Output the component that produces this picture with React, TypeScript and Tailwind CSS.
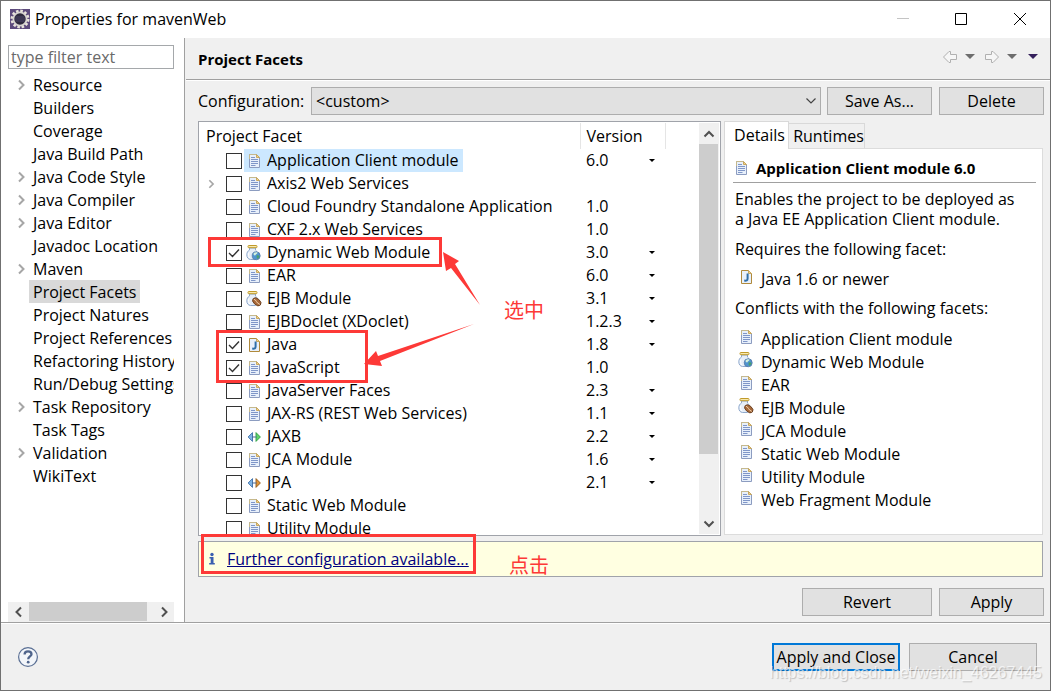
import React from "react";

type IconKind = "doc" | "jarWeb" | "jarBean" | "java" | "jaxb" | "jpa";

interface TreeEntry {
  label: string;
  children?: boolean;
  selected?: boolean;
}

interface Facet {
  name: string;
  icon: IconKind;
  version?: string;
  menu?: boolean;
  checked?: boolean;
  expandable?: boolean;
  selected?: boolean;
}

const tree: TreeEntry[] = [
  { label: "Resource", children: true },
  { label: "Builders" },
  { label: "Coverage" },
  { label: "Java Build Path" },
  { label: "Java Code Style", children: true },
  { label: "Java Compiler", children: true },
  { label: "Java Editor", children: true },
  { label: "Javadoc Location" },
  { label: "Maven", children: true },
  { label: "Project Facets", selected: true },
  { label: "Project Natures" },
  { label: "Project References" },
  { label: "Refactoring History" },
  { label: "Run/Debug Settings" },
  { label: "Task Repository", children: true },
  { label: "Task Tags" },
  { label: "Validation", children: true },
  { label: "WikiText" },
];

const facets: Facet[] = [
  { name: "Application Client module", icon: "doc", version: "6.0", menu: true, selected: true },
  { name: "Axis2 Web Services", icon: "doc", expandable: true },
  { name: "Cloud Foundry Standalone Application", icon: "doc", version: "1.0" },
  { name: "CXF 2.x Web Services", icon: "doc", version: "1.0" },
  { name: "Dynamic Web Module", icon: "jarWeb", version: "3.0", menu: true, checked: true },
  { name: "EAR", icon: "doc", version: "6.0", menu: true },
  { name: "EJB Module", icon: "jarBean", version: "3.1", menu: true },
  { name: "EJBDoclet (XDoclet)", icon: "doc", version: "1.2.3", menu: true },
  { name: "Java", icon: "java", version: "1.8", menu: true, checked: true },
  { name: "JavaScript", icon: "doc", version: "1.0", checked: true },
  { name: "JavaServer Faces", icon: "doc", version: "2.3", menu: true },
  { name: "JAX-RS (REST Web Services)", icon: "doc", version: "1.1", menu: true },
  { name: "JAXB", icon: "jaxb", version: "2.2", menu: true },
  { name: "JCA Module", icon: "doc", version: "1.6", menu: true },
  { name: "JPA", icon: "jpa", version: "2.1", menu: true },
  { name: "Static Web Module", icon: "doc" },
  { name: "Utility Module", icon: "doc" },
];

const conflicts: { name: string; icon: IconKind }[] = [
  { name: "Application Client module", icon: "doc" },
  { name: "Dynamic Web Module", icon: "jarWeb" },
  { name: "EAR", icon: "doc" },
  { name: "EJB Module", icon: "jarBean" },
  { name: "JCA Module", icon: "doc" },
  { name: "Static Web Module", icon: "doc" },
  { name: "Utility Module", icon: "doc" },
  { name: "Web Fragment Module", icon: "doc" },
];

function Page({ stroke }: { stroke: string }) {
  return (
    <>
      <path d="M3.5 1.5H10.5L13.5 4.5V14.5H3.5Z" fill="#e8f0fb" stroke={stroke} />
      <path d="M10.5 1.5V4.5H13.5Z" fill="#f0d48c" stroke="#c9a860" />
    </>
  );
}

function Jar() {
  return (
    <>
      <path d="M3.5 3V5C1.8 6 0.8 7.5 0.8 9.8C0.8 12.5 2.2 14.3 4.5 14.5H9C11 14 11.5 12 11.5 9.5C11.5 7.5 10.8 6 9.5 5V3Z" fill="#e6eef8" stroke="#8fa9cc" />
      <path d="M3 7.5C2.2 9.5 2.5 11.5 3.8 13" fill="none" stroke="#ffffff" />
      <rect x="2" y="0.5" width="9" height="2.2" rx="0.8" fill="#f8e9ae" stroke="#c09a2a" />
    </>
  );
}

function FacetIcon({ kind }: { kind: IconKind }) {
  return (
    <svg viewBox="0 0 16 16" className="size-4 shrink-0" aria-hidden="true">
      {kind === "doc" && (
        <>
          <Page stroke="#8c9cc0" />
          <path d="M3.5 6V1.5H10" fill="none" stroke="#c6b98c" />
          <path d="M5 4.5H9M5 6.5H12M5 8.5H12M5 10.5H12M5 12.5H9.5" stroke="#7f96c8" />
        </>
      )}
      {kind === "java" && (
        <>
          <Page stroke="#b08a3c" />
          <path d="M9.6 4.5V9.6C9.6 11.4 8.6 12 6.2 11.6" fill="none" stroke="#2f6ea8" strokeWidth="2" />
        </>
      )}
      {kind === "jarWeb" && (
        <>
          <Jar />
          <circle cx="10.2" cy="10.8" r="4" fill="#4f93cf" stroke="#5678a4" strokeWidth="0.8" />
          <path d="M7.6 8.6C8.6 7.2 10.6 7 11.6 7.6C11.4 9.2 9.6 9.2 9.2 10.6C8.2 10.4 7.4 9.8 7.6 8.6Z" fill="#d4f0dc" />
          <path d="M10.6 10.6C12 10 13.2 10.6 13.4 11.4C12.8 13 11.6 13.8 10.8 13.6Z" fill="#49a06c" />
        </>
      )}
      {kind === "jarBean" && (
        <>
          <Jar />
          <ellipse cx="10.8" cy="10.8" rx="4.8" ry="3.1" transform="rotate(42 10.8 10.8)" fill="#a8693a" stroke="#5f3517" strokeWidth="0.8" />
          <path d="M7.8 8.2C10.4 8.6 10.4 12.4 13.8 13.4" fill="none" stroke="#f0d2ae" />
        </>
      )}
      {(kind === "jaxb" || kind === "jpa") && (
        <>
          <path d="M6.5 3.6V12.4L2.1 8Z" fill="#7fb4e4" stroke="#3b6ea8" strokeWidth="0.9" />
          <path
            d="M10 3.6V12.4L14.4 8Z"
            fill={kind === "jaxb" ? "#5fd46a" : "#e0953a"}
            stroke={kind === "jaxb" ? "#2f9c45" : "#8f5a1c"}
            strokeWidth="0.9"
          />
          <path d="M6 8H10.5" stroke="#4a6a94" />
        </>
      )}
    </svg>
  );
}

function Chevron({ d, className, width = 2 }: { d: string; className: string; width?: number }) {
  return (
    <svg viewBox="0 0 12 12" className={className} fill="none" stroke="currentColor" strokeWidth={width} aria-hidden="true">
      <path d={d} />
    </svg>
  );
}

const RIGHT = "M4 1.5L8.5 6L4 10.5";
const LEFT = "M8 1.5L3.5 6L8 10.5";
const UP = "M1.5 8.5L6 4L10.5 8.5";
const DOWN = "M1.5 3.5L6 8L10.5 3.5";

function GearLogo() {
  return (
    <svg viewBox="0 0 20 20" className="size-5" aria-hidden="true">
      <rect width="20" height="20" fill="#5d4a7c" />
      <circle cx="10" cy="10" r="8" fill="none" stroke="#e9e4dc" strokeWidth="3" strokeDasharray="2.5 1.69" />
      <circle cx="10" cy="10" r="6.6" fill="#2f2a3e" stroke="#d8d4d0" strokeWidth="1.8" />
      <path d="M5.5 8H14.5M5 10H15M5.5 12H14.5" stroke="#4c4468" />
    </svg>
  );
}

function NavArrow({ flip }: { flip?: boolean }) {
  return (
    <svg viewBox="0 0 16 14" className="h-[14px] w-4" fill="#f6f6f6" stroke="#b0b0b0" aria-hidden="true">
      <path
        d={
          flip
            ? "M1.5 4.5H7.5V1.5H9L14.5 7L9 12.5H7.5V9.5H1.5Z"
            : "M14.5 4.5H8.5V1.5H7L1.5 7L7 12.5H8.5V9.5H14.5Z"
        }
        strokeLinejoin="round"
      />
    </svg>
  );
}

function Caret({ className }: { className: string }) {
  return (
    <svg viewBox="0 0 10 5" className={className} fill="currentColor" aria-hidden="true">
      <path d="M0 0H10L5 5Z" />
    </svg>
  );
}

function PushButton({ children, className }: { children: React.ReactNode; className: string }) {
  return (
    <button type="button" className={`h-7 border border-[#adadad] bg-[#e1e1e1] text-center ${className}`}>
      {children}
    </button>
  );
}

function TitleBar() {
  return (
    <header className="flex h-[37px] shrink-0 items-center bg-white pb-px pl-[9px]">
      <GearLogo />
      <h1 className="ml-[5px] grow">Properties for mavenWeb</h1>
      <button type="button" aria-label="Minimize" className="flex w-[58px] justify-center text-[#c4c4c4]">
        <svg viewBox="0 0 12 12" className="size-3" stroke="currentColor"><path d="M0 5.5H12" /></svg>
      </button>
      <button type="button" aria-label="Maximize" className="flex w-[58px] justify-center">
        <svg viewBox="0 0 12 12" className="size-3" fill="none" stroke="currentColor"><path d="M0.5 0.5H11.5V11.5H0.5Z" /></svg>
      </button>
      <button type="button" aria-label="Close" className="flex w-[60px] justify-center">
        <svg viewBox="0 0 12 12" className="size-3" stroke="currentColor"><path d="M0 0L12 12M12 0L0 12" /></svg>
      </button>
    </header>
  );
}

function Sidebar() {
  return (
    <nav className="flex w-[184px] shrink-0 flex-col border-r border-[#a0a0a0] bg-white pt-[7px] pr-[10px] pl-[7px]">
      <input
        type="text"
        aria-label="Filter"
        placeholder="type filter text"
        className="h-6 w-full shrink-0 border border-[#a5a8ab] bg-white px-[2px] outline-none placeholder:text-[#6a6a6a]"
      />
      <ul className="mt-1 min-h-0 grow overflow-hidden">
        {tree.map((entry) => (
          <li key={entry.label} className="flex h-[23px] items-center">
            <span className="flex w-[21px] shrink-0 justify-center pl-[5px] text-[#a6a6a6]">
              {entry.children && <Chevron d={RIGHT} className="size-3" />}
            </span>
            <button
              type="button"
              className={`h-[23px] shrink-0 px-1 whitespace-nowrap ${entry.selected ? "bg-[#d9d9d9]" : ""}`}
            >
              {entry.label}
            </button>
          </li>
        ))}
      </ul>
      <div className="flex h-5 shrink-0 items-stretch bg-[#f0f0f0] text-[#505050]">
        <button type="button" aria-label="Scroll left" className="flex w-[21px] items-center justify-center">
          <Chevron d={LEFT} className="size-3" />
        </button>
        <div className="grow">
          <div className="h-[19px] w-[95%] bg-[#cdcdcd]" />
        </div>
        <button type="button" aria-label="Scroll right" className="flex w-[21px] items-center justify-center">
          <Chevron d={RIGHT} className="size-3" />
        </button>
      </div>
    </nav>
  );
}

function FacetTable() {
  return (
    <section className="flex min-w-0 grow border border-[#a0a3aa] bg-white p-px">
      <div className="min-w-0 grow overflow-hidden">
        <table className="w-full table-fixed border-collapse text-left">
          <colgroup>
            <col />
            <col className="w-[85px]" />
            <col className="w-[34px]" />
          </colgroup>
          <thead>
            <tr className="h-[26px]">
              <th className="border-r border-[#e5e5e5] p-0 pl-[6px] font-normal">Project Facet</th>
              <th className="border-r border-[#e5e5e5] p-0 pl-[6px] font-normal">Version</th>
              <td />
            </tr>
          </thead>
          <tbody className="leading-5">
            {facets.map((facet) => (
              <tr key={facet.name} className="h-[23px]">
                <td className="p-0">
                  <div className="flex h-[23px] items-center">
                    <span className="flex w-[26px] shrink-0 pl-[6px] text-[#a6a6a6]">
                      {facet.expandable && <Chevron d={RIGHT} className="size-[10px]" />}
                    </span>
                    <label className="flex h-[23px] items-center">
                      <span className="grid size-4 shrink-0">
                        <input
                          type="checkbox"
                          defaultChecked={facet.checked}
                          className="peer col-start-1 row-start-1 size-4 appearance-none border border-[#333333] bg-white"
                        />
                        <svg
                          viewBox="0 0 16 16"
                          className="pointer-events-none invisible col-start-1 row-start-1 size-4 peer-checked:visible"
                          fill="none"
                          stroke="#333333"
                          strokeWidth="1.4"
                          aria-hidden="true"
                        >
                          <path d="M3 8L6.5 11.5L13 4.5" />
                        </svg>
                      </span>
                      <span
                        className={`ml-[2px] flex h-[23px] items-center gap-[5px] pr-1 pl-[2px] whitespace-nowrap ${facet.selected ? "bg-[#cce8ff]" : ""}`}
                      >
                        <FacetIcon kind={facet.icon} />
                        <span className="pb-px">{facet.name}</span>
                      </span>
                    </label>
                  </div>
                </td>
                <td className="p-0 pl-[6px]">
                  <div className="grid h-[23px] items-center pb-px">
                    {facet.menu ? (
                      <>
                        <select
                          aria-label={`${facet.name} version`}
                          defaultValue={facet.version}
                          className="col-start-1 row-start-1 w-full appearance-none bg-transparent outline-none"
                        >
                          <option>{facet.version}</option>
                        </select>
                        <Caret className="pointer-events-none col-start-1 row-start-1 mr-[10px] h-[3px] w-[6px] justify-self-end" />
                      </>
                    ) : (
                      facet.version
                    )}
                  </div>
                </td>
                <td />
              </tr>
            ))}
          </tbody>
        </table>
      </div>
      <div className="flex w-5 shrink-0 flex-col bg-[#f0f0f0] text-[#505050]">
        <button type="button" aria-label="Scroll up" className="flex h-[21px] items-center justify-center">
          <Chevron d={UP} className="size-3" />
        </button>
        <div className="grow">
          <div className="h-[84%] w-[19px] bg-[#cdcdcd]" />
        </div>
        <button type="button" aria-label="Scroll down" className="flex h-[21px] items-center justify-center">
          <Chevron d={DOWN} className="size-3" />
        </button>
      </div>
    </section>
  );
}

function DetailItem({ icon, name }: { icon: IconKind; name: string }) {
  return (
    <li className="flex h-[23px] items-center gap-[7px]">
      <span className="pb-1">
        <FacetIcon kind={icon} />
      </span>
      {name}
    </li>
  );
}

function DetailsPane() {
  return (
    <section className="mb-px flex w-[319px] shrink-0 flex-col">
      <div role="tablist" className="flex h-[27px] shrink-0 items-end">
        <button
          type="button"
          role="tab"
          aria-selected="true"
          className="z-10 -mb-px h-7 w-[65px] border border-b-0 border-[#d9d9d9] bg-white pb-[2px] pl-[6px] text-center"
        >
          Details
        </button>
        <button
          type="button"
          role="tab"
          aria-selected="false"
          className="h-[25px] w-[76px] border border-b-0 border-l-0 border-[#d9d9d9] bg-[#f0f0f0] pl-1 text-center"
        >
          Runtimes
        </button>
      </div>
      <div role="tabpanel" className="min-h-0 grow overflow-hidden border border-[#dcdcdc] bg-white pt-[7px] pr-[6px] pl-2">
        <h3 className="flex h-[27px] items-center gap-[7px] border-b border-[#a0a0a0] pb-[3px] text-[15px] font-bold">
          <FacetIcon kind="doc" />
          Application Client module 6.0
        </h3>
        <div className="pt-[6px] pl-[2px] leading-5">
          <p className="max-w-[286px]">Enables the project to be deployed as a Java EE Application Client module.</p>
          <p className="mt-[10px]">Requires the following facet:</p>
          <ul className="mt-2 pl-[3px]">
            <DetailItem icon="java" name="Java 1.6 or newer" />
          </ul>
          <p className="mt-2">Conflicts with the following facets:</p>
          <ul className="mt-[9px] pl-[3px]">
            {conflicts.map((item) => (
              <DetailItem key={item.name} icon={item.icon} name={item.name} />
            ))}
          </ul>
        </div>
      </div>
    </section>
  );
}

function FacetsPage() {
  return (
    <main className="flex min-w-0 grow flex-col pl-px">
      <div className="flex h-[42px] shrink-0 items-center border-b border-[#a0a0a0] pr-3 pl-3">
        <h2 className="grow text-[15px] font-bold">Project Facets</h2>
        <div className="flex items-center gap-[7px] pb-1 text-[#6d6d6d]">
          <button type="button" aria-label="Back"><NavArrow /></button>
          <button type="button" aria-label="Back history"><Caret className="h-[5px] w-[10px]" /></button>
          <button type="button" aria-label="Forward" className="ml-[2px]"><NavArrow flip /></button>
          <button type="button" aria-label="Forward history"><Caret className="h-[5px] w-[10px]" /></button>
          <button type="button" aria-label="View menu" className="ml-1 text-[#35205c]"><Caret className="h-[5px] w-[10px]" /></button>
        </div>
      </div>
      <div className="flex min-h-0 grow flex-col border-t border-white pt-[6px] pr-[6px] pb-[6px] pl-3">
        <div className="flex shrink-0 items-center">
          <label htmlFor="configuration" className="w-[113px] shrink-0">Configuration:</label>
          <span className="grid grow items-center">
            <select
              id="configuration"
              className="col-start-1 row-start-1 h-7 w-full appearance-none border border-[#adadad] bg-[#e1e1e1] px-1 outline-none"
            >
              <option>&lt;custom&gt;</option>
            </select>
            <Chevron d={DOWN} width={1.2} className="pointer-events-none col-start-1 row-start-1 mr-1 size-3 justify-self-end text-[#444444]" />
          </span>
          <PushButton className="ml-[6px] w-[105px]">Save As...</PushButton>
          <PushButton className="ml-[7px] w-[105px]">Delete</PushButton>
        </div>
        <div className="mt-[6px] mr-px flex min-h-0 grow gap-[3px]">
          <FacetTable />
          <DetailsPane />
        </div>
        <div className="mt-[5px] mr-px flex h-9 shrink-0 items-center border border-[#a0a3aa] bg-[#ffffe1] pl-[7px]">
          <svg viewBox="0 0 12 14" className="h-[14px] w-3" fill="#3a5fb0" aria-hidden="true">
            <circle cx="6" cy="2.5" r="1.7" />
            <path d="M3.5 5H7.5V11H8.8V12.5H3.2V11H4.7V6.5H3.5Z" />
          </svg>
          <a href="#configure" className="ml-[9px] text-[#000080] underline">Further configuration available...</a>
        </div>
        <div className="mt-[11px] flex shrink-0 justify-end gap-[7px]">
          <PushButton className="w-[130px]">Revert</PushButton>
          <PushButton className="w-[105px]">Apply</PushButton>
        </div>
      </div>
    </main>
  );
}

function Footer() {
  return (
    <footer className="shrink-0 border-t border-[#a0a0a0]">
      <div className="flex h-[67px] items-center border-t border-white pr-[13px] pl-4">
        <button type="button" aria-label="Help" className="mr-auto pb-px">
          <svg viewBox="0 0 22 22" className="size-[22px]" fill="none" aria-hidden="true">
            <circle cx="11" cy="11" r="9.4" fill="#f3f6fa" stroke="#5a6f94" strokeWidth="1.2" />
            <path d="M7.6 8.6C7.6 6.5 9 5.4 11 5.4C13 5.4 14.5 6.5 14.5 8.2C14.5 10.4 11.2 10.6 11.2 13.2" stroke="#50658c" strokeWidth="2.3" />
            <circle cx="11.2" cy="16.2" r="1.4" fill="#50658c" />
          </svg>
        </button>
        <button type="button" className="h-7 w-32 border-2 border-[#0078d7] bg-[#e1e1e1] whitespace-nowrap">
          Apply and Close
        </button>
        <PushButton className="ml-[9px] w-32">Cancel</PushButton>
      </div>
    </footer>
  );
}

function Annotations() {
  return (
    <div className="pointer-events-none absolute inset-0 z-20 font-['Noto_Sans_CJK_SC',sans-serif] text-[20px] leading-6 text-[#fd3937]">
      <div className="absolute top-[236px] left-[207px] h-[30px] w-[234px] border-3 border-current" />
      <div className="absolute top-[329px] left-[215px] h-[53px] w-[152px] border-3 border-current" />
      <div className="absolute top-[533px] left-[200px] h-10 w-[275px] border-3 border-current" />
      <svg viewBox="0 0 118 118" className="absolute top-[250px] left-[362px] size-[118px]" fill="currentColor" aria-hidden="true">
        <path d="M80 1L96 10L92 13L117 54L88 17L83 20Z" />
        <path d="M1 113L13 100L15 105L111 73L17 110L19 115Z" />
      </svg>
      <span className="absolute top-[297px] left-[503px]">选中</span>
      <span className="absolute top-[552px] left-[508px]">点击</span>
      <span className="absolute right-2 bottom-[7px] font-['Liberation_Sans',sans-serif] text-[16px] leading-5 text-white/70 [text-shadow:1px_1px_1px_rgba(0,0,0,0.2)]">
        https://blog.csdn.net/weixin_46267445
      </span>
    </div>
  );
}

export default function App() {
  return (
    <div className="relative flex h-screen w-full flex-col overflow-hidden border border-[#707070] bg-[#f0f0f0] font-['Open_Sans','Noto_Sans',sans-serif] text-[16px] leading-[22px] text-black">
      <TitleBar />
      <div className="flex min-h-0 grow">
        <Sidebar />
        <FacetsPage />
      </div>
      <Footer />
      <Annotations />
    </div>
  );
}
